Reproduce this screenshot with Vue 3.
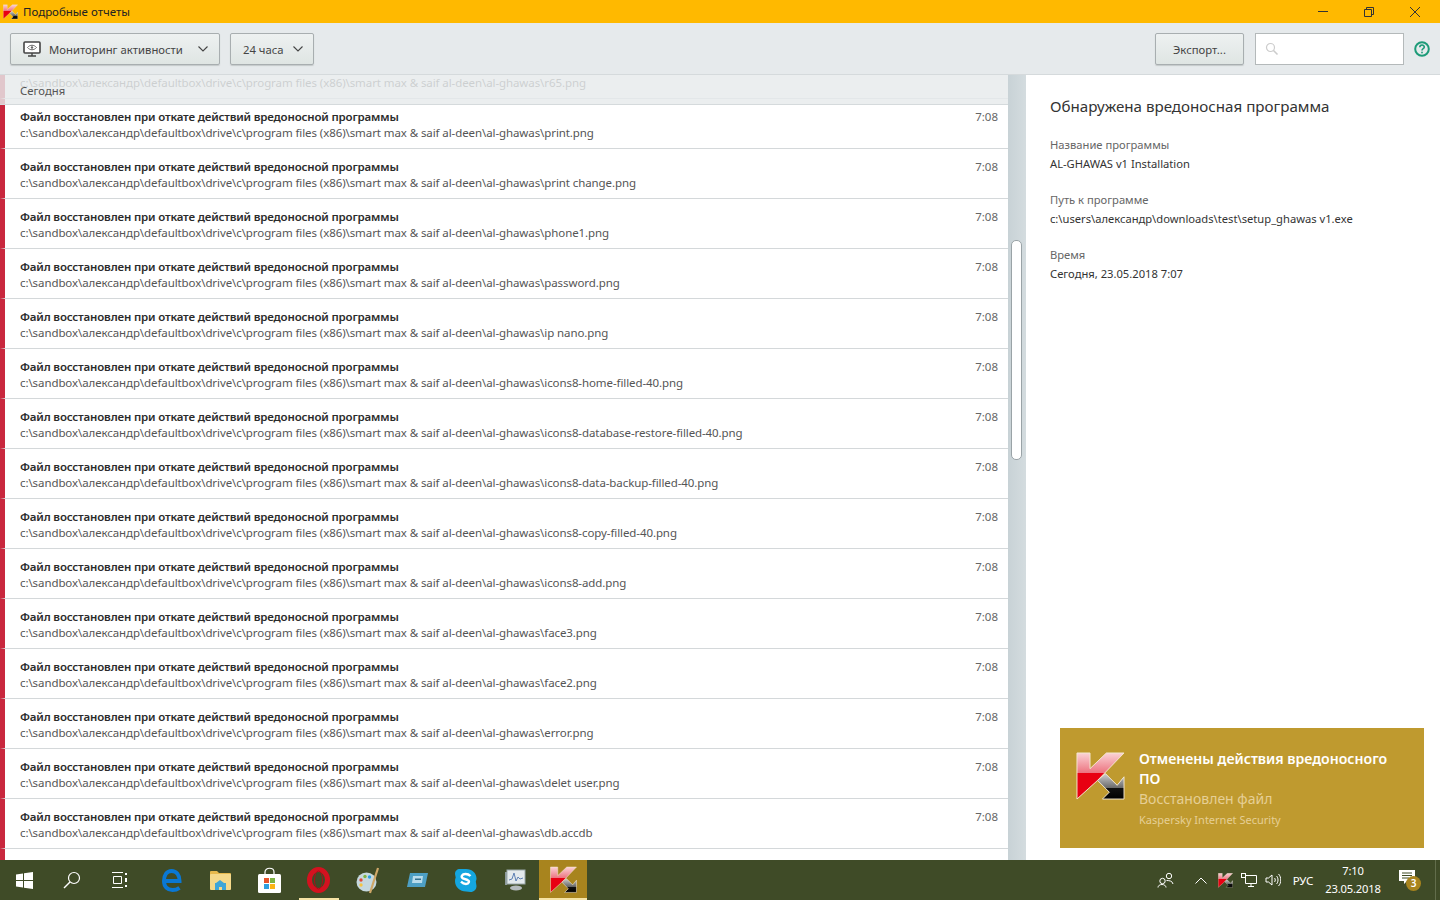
<script setup>
const base = 'c:\\sandbox\\александр\\defaultbox\\drive\\c\\program files (x86)\\smart max & saif al-deen\\al-ghawas\\'
const files = ['r65.png','print.png','print change.png','phone1.png','password.png','ip nano.png','icons8-home-filled-40.png','icons8-database-restore-filled-40.png','icons8-data-backup-filled-40.png','icons8-copy-filled-40.png','icons8-add.png','face3.png','face2.png','error.png','delet user.png','db.accdb','data.png']
const rows = files.map((f) => ({ path: base + f, title: 'Файл восстановлен при откате действий вредоносной программы', time: '7:08' }))
const details = [
  { label: 'Название программы', value: 'AL-GHAWAS v1 Installation' },
  { label: 'Путь к программе', value: 'c:\\users\\александр\\downloads\\test\\setup_ghawas v1.exe' },
  { label: 'Время', value: 'Сегодня, 23.05.2018 7:07' },
]
</script>

<template>
  <div class="app">
    <svg class="defs" width="0" height="0" aria-hidden="true">
      <defs>
        <linearGradient id="kr" x1="0" y1="0" x2="0" y2="1"><stop offset="0" stop-color="#fbd3d6"/><stop offset=".43" stop-color="#ec7480"/><stop offset=".43" stop-color="#e80012"/><stop offset="1" stop-color="#e80012"/></linearGradient>
        <linearGradient id="kk" x1="0" y1="0" x2="0" y2="1"><stop offset="0" stop-color="#d0d0d0"/><stop offset=".58" stop-color="#666"/><stop offset=".58" stop-color="#111"/><stop offset="1" stop-color="#000"/></linearGradient>
        <symbol id="klogo" viewBox="-1 -1 50 50">
          <path d="M0 0h13.300v16L30 0h18L21 28 0 47z" fill="url(#kr)" stroke="#f3e6cf" stroke-width="1"/>
          <path d="M21 28l8-7 12 12 7-8.700V47H26l7-7z" fill="url(#kk)" stroke="#f3e6cf" stroke-width="1"/>
        </symbol>
      </defs>
    </svg>
    <header class="titlebar">
      <svg class="tlogo" width="15" height="16"><use href="#klogo"/></svg>
      <span class="ttext">Подробные отчеты</span>
      <div class="winctl">
        <svg width="12" height="12" viewBox="0 0 12 12"><path d="M1 5.500h10" stroke="#333" fill="none"/></svg>
        <svg width="12" height="12" viewBox="0 0 12 12"><path d="M1.500 3.500h7v7h-7zM3.500 3.500v-2h7v7h-2" stroke="#333" fill="none"/></svg>
        <svg width="12" height="12" viewBox="0 0 12 12"><path d="M1 1l10 10M11 1L1 11" stroke="#333" fill="none"/></svg>
      </div>
    </header>

    <div class="toolbar">
      <button class="btn sel1">
        <svg width="18" height="16" viewBox="0 0 18 16"><rect x="1" y="1" width="16" height="11" rx="1" fill="#fff" stroke="#444" stroke-width="1.600"/><path d="M4.500 6.500c2.500-3 6.500-3 9 0-2.500 3-6.500 3-9 0z" fill="none" stroke="#666"/><circle cx="9" cy="6.500" r="1.200" fill="#666"/><path d="M9 12v3M5 15h8" stroke="#444" stroke-width="1.400"/></svg>
        <span class="l1">Мониторинг активности</span>
        <svg class="chev" width="10" height="6" viewBox="0 0 10 6"><path d="M.5.500L5 5 9.500.500" fill="none" stroke="#444" stroke-width="1.100"/></svg>
      </button>
      <button class="btn sel2">
        <span class="lbl">24 часа</span>
        <svg class="chev" width="10" height="6" viewBox="0 0 10 6"><path d="M.5.500L5 5 9.500.500" fill="none" stroke="#444" stroke-width="1.100"/></svg>
      </button>
      <div class="spacer"></div>
      <button class="btn export"><span class="lbl">Экспорт...</span></button>
      <div class="search">
        <svg width="14" height="14" viewBox="0 0 14 14"><circle cx="5.500" cy="5.500" r="4" fill="none" stroke="#ccc" stroke-width="1.200"/><path d="M8.500 8.500l4 4" stroke="#ccc" stroke-width="1.600"/></svg>
      </div>
      <svg class="help" width="16" height="16" viewBox="0 0 16 16"><circle cx="8" cy="8" r="6.800" fill="none" stroke="#1d9b78" stroke-width="2"/><path d="M5.800 6.300c0-3 4.500-3 4.500-.2 0 1.600-2.300 1.600-2.300 3.300" fill="none" stroke="#1d9b78" stroke-width="1.600"/><rect x="7.200" y="10.700" width="1.600" height="1.600" fill="#1d9b78"/></svg>
    </div>

    <main class="content">
      <section class="list">
        <div class="group">Сегодня</div>
        <div class="rows">
          <div v-for="(r, i) in rows" :key="i" class="row">
            <div class="rtext">
              <div class="rtitle">{{ r.title }}</div>
              <div class="rpath">{{ r.path }}</div>
            </div>
            <div class="rtime">{{ r.time }}</div>
          </div>
        </div>
      </section>
      <div class="gutter"><div class="thumb"></div></div>
      <aside class="detail">
        <h2>Обнаружена вредоносная программа</h2>
        <div v-for="d in details" :key="d.label" class="field">
          <div class="flabel">{{ d.label }}</div>
          <div class="fvalue">{{ d.value }}</div>
        </div>
        <div class="toast">
          <svg class="klogo" width="49" height="49"><use href="#klogo"/></svg>
          <div class="ttx">
            <div class="t1">Отменены действия вредоносного ПО</div>
            <div class="t2">Восстановлен файл</div>
            <div class="t3">Kaspersky Internet Security</div>
          </div>
        </div>
      </aside>
    </main>

    <footer class="taskbar">
      <div class="tb-item first">
        <svg width="17" height="17" viewBox="0 0 17 17"><path d="M0 2.500l7-1v6.500H0zM8 1.300L17 0v8H8zM0 9h7v6.500l-7-1zM8 9h9v8l-9-1.300z" fill="#fff"/></svg>
      </div>
      <div class="tb-item first">
        <svg width="18" height="18" viewBox="0 0 18 18"><circle cx="11" cy="7" r="5.500" fill="none" stroke="#fff" stroke-width="1.200"/><path d="M7 11l-6 6" stroke="#fff" stroke-width="1.400"/></svg>
      </div>
      <div class="tb-item first">
        <svg width="16" height="16" viewBox="0 0 16 16"><path d="M0 .5h11M0 15.500h11M1.500 4.500h8v7h-8z" fill="none" stroke="#fff"/><path d="M14 1v2M14 6v4M14 13v2" stroke="#fff" stroke-width="2"/></svg>
      </div>
      <div class="tb-item edge">
        <svg width="20" height="24" viewBox="0 0 20 24"><path d="M4 13h13.500c0-6-3-10-8-10C5 3 2 7 2 13c0 6 4 9 8.500 9 2.500 0 5-.8 7-2.200" fill="none" stroke="#0a78d4" stroke-width="4"/></svg>
      </div>
      <div class="tb-item">
        <svg width="21" height="21" viewBox="0 0 21 21"><path d="M0 2q0-1 1-1h6l2 2h11q1 0 1 1v3H0z" fill="#e7b94c"/><rect y="4" width="21" height="16" rx="1" fill="#f5d98a"/><path d="M5 20v-7h1l4-3 4 3h2v7h-4v-3H9v3z" fill="#3ea6d8"/></svg>
      </div>
      <div class="tb-item">
        <svg width="23" height="26" viewBox="0 0 23 26"><path d="M7 8V5c0-5 9-5 9 0v3" fill="none" stroke="#fff" stroke-width="1.200"/><rect y="7" width="23" height="19" rx="1.500" fill="#fff"/><rect x="6" y="11" width="5" height="5" fill="#e8532b"/><rect x="12" y="11" width="5" height="5" fill="#7db343"/><rect x="6" y="17" width="5" height="5" fill="#2f9fe0"/><rect x="12" y="17" width="5" height="5" fill="#fbb416"/></svg>
      </div>
      <div class="tb-item">
        <svg width="23" height="26" viewBox="0 0 23 26"><ellipse cx="11.500" cy="13" rx="9" ry="10.500" fill="none" stroke="#d3121f" stroke-width="5"/><ellipse cx="11.500" cy="13" rx="4" ry="9" fill="none" stroke="#a90f19" stroke-width="1"/></svg>
        <span class="under"></span>
      </div>
      <div class="tb-item">
        <svg width="24" height="27" viewBox="0 0 24 27"><ellipse cx="10.500" cy="15" rx="10" ry="9.500" fill="#c5d8de"/><circle cx="5" cy="13" r="1.700" fill="#dd4b39"/><circle cx="9" cy="9.500" r="1.700" fill="#7db343"/><circle cx="13.500" cy="10" r="1.700" fill="#2f9fe0"/><circle cx="5" cy="18" r="1.700" fill="#f5c542"/><path d="M22 1l-8 25" stroke="#cfa768" stroke-width="2.200"/></svg>
      </div>
      <div class="tb-item">
        <svg width="22" height="16" viewBox="0 0 22 16"><path d="M4 1h18l-3 14H1z" fill="#4d9fc4"/><path d="M7 4h10l-1 7H6z" fill="#b9dcec"/><path d="M9 6.500h6V8H9z" fill="#35718f"/></svg>
      </div>
      <div class="tb-item">
        <svg width="23" height="25" viewBox="0 0 23 25"><path d="M6 1C3 1 1 3 1 6l.7 3.500C1.200 10.500 1 12 1 13c0 6 5 10.500 11 10.500l4.500.5c3.500 0 6-2.500 6-6l-.7-4.500c.4-1 .7-2 .7-3C22.500 5 18 1 12 1z" fill="#14a6e0"/><path d="M16.500 8C15 6.500 13.500 6 11.500 6 8 6 6.500 9 9 10.500l4.500 1.500c2.500 1 1.500 4-1.500 4-2 0-3.500-.8-5-2.300" fill="none" stroke="#fff" stroke-width="2.400"/></svg>
      </div>
      <div class="tb-item">
        <svg width="22" height="24" viewBox="0 0 22 24"><path d="M1 4h2v13H1z" fill="#8d9a9d"/><rect x="3" y="2" width="18" height="14" fill="#e3e9ec" stroke="#9aa7aa"/><path d="M5 12l3-1 2-6 2 8 2-4 2 2 3-1" fill="none" stroke="#5d80b4"/><ellipse cx="12" cy="20" rx="6" ry="2.500" fill="#b5bbbd"/></svg>
      </div>
      <div class="tb-item kav">
        <svg width="27" height="28"><use href="#klogo"/></svg>
        <span class="under full"></span>
      </div>
      <div class="tray">
        <div class="slot person">
          <svg width="17" height="16" viewBox="0 0 17 16"><circle cx="5.500" cy="9" r="2.700" fill="none" stroke="#fff"/><circle cx="12" cy="4" r="2.700" fill="none" stroke="#fff"/><path d="M1 15.500c0-4 8-4 8 0M9.500 8.500c3 0 6 .5 6.500 3.500" fill="none" stroke="#fff"/></svg>
        </div>
        <div class="slot"><svg width="12" height="7" viewBox="0 0 12 7"><path d="M.5 6.500L6 1l5.500 5.500" fill="none" stroke="#fff"/></svg></div>
        <div class="slot"><svg width="15" height="15"><use href="#klogo"/></svg></div>
        <div class="slot"><svg width="16" height="14" viewBox="0 0 16 14"><path d="M4.500 2.500H15.500v8H4.500zM7 13.500h6M10 10.500v3" fill="none" stroke="#fff"/><rect x=".5" y=".5" width="4" height="4" fill="#3f4b27" stroke="#fff"/></svg></div>
        <div class="slot"><svg width="16" height="14" viewBox="0 0 16 14"><path d="M1 5h2.500L7 2v10L3.500 9H1zM9.500 5c1 1 1 3 0 4M11.500 3c2 2 2 6 0 8M13.500 1c3 3 3 9 0 12" fill="none" stroke="#fff"/></svg></div>
        <span class="lang">РУС</span>
        <div class="clock"><div>7:10</div><div>23.05.2018</div></div>
        <div class="notif">
          <svg width="16" height="14" viewBox="0 0 16 14"><path d="M0 0h16v11H8l-3 3v-3H0z" fill="#fff"/><path d="M3 3h10M3 5.500h10M3 8h7" stroke="#3f4b27"/></svg>
          <span class="badge">3</span>
        </div>
        <span class="divider"></span>
      </div>
    </footer>
  </div>
</template>

<style>
html, body { margin: 0; }
</style>

<style scoped>
.app { width: 1440px; height: 900px; display: flex; flex-direction: column; overflow: hidden; background: #fff; font-family: "Noto Sans", "Open Sans", sans-serif; color: #333; font-size: 12px; }
.defs { position: absolute; }
.titlebar { height: 23px; flex: none; background: #ffb900; display: flex; align-items: center; padding-left: 3px; }
.tlogo { margin-right: 5px; }
.ttext { font-size: 11.500px; color: #222; }
.winctl { margin-left: auto; display: flex; gap: 34px; padding-right: 19px; align-items: center; }
.toolbar { height: 52px; flex: none; box-sizing: border-box; background: #e6eaec; border-bottom: 1px solid #d5dadc; display: flex; align-items: center; padding: 0 10px; }
.btn { box-sizing: border-box; height: 32px; border: 1px solid #a8aeb0; border-radius: 2px; background: linear-gradient(#eef1f1, #dfe5e3); box-shadow: 0 1px 1px #c4c9ca; font: inherit; font-size: 11.300px; color: #444; display: flex; align-items: center; padding: 0; }
.sel1 { width: 210px; padding-left: 12px; }
.l1 { margin-left: 8px; margin-top: 2px; }
.lbl { margin-top: 2px; }
.sel1 .chev { margin-left: 15px; }
.sel2 { width: 84px; margin-left: 10px; padding-left: 12px; }
.sel2 .chev { margin-left: 9px; }
.spacer { flex: 1; }
.export { width: 89px; justify-content: center; }
.search { box-sizing: border-box; width: 149px; height: 32px; margin-left: 11px; background: #fff; border: 1px solid #b4b9ba; display: flex; align-items: center; padding-left: 9px; }
.help { margin-left: 10px; }
.content { flex: 1; min-height: 0; display: flex; }
.list { position: relative; width: 1008px; overflow: hidden; }
.group { position: absolute; z-index: 1; left: 0; top: 0; right: 0; height: 30px; box-sizing: border-box; padding: 7px 0 0 20px; background: rgba(230, 234, 236, .82); border-bottom: 1px solid #d5dadc; color: #555; font-size: 11.300px; line-height: 18px; }
.rows { margin-top: -26px; }
.row { box-sizing: border-box; height: 50px; border-bottom: 1px solid #d4d8da; border-left: 5px solid #c9283e; padding: 9px 10px 0 15px; display: flex; justify-content: space-between; background: #fff; }
.rtitle { font-weight: 600; color: #2b2b2b; line-height: 18px; font-size: 11.500px; letter-spacing: -.17px; }
.rpath { color: #555; line-height: 14px; font-size: 11.500px; letter-spacing: -.09px; }
.rtime { color: #666; line-height: 18px; font-size: 11.500px; }
.gutter { width: 18px; flex: none; background: linear-gradient(90deg, #c8d2d6, #d4dcdf); position: relative; }
.thumb { position: absolute; left: 3px; top: 165px; width: 11px; height: 220px; box-sizing: border-box; border: 1px solid #9aa3a7; border-radius: 5px; background: #fff; }
.detail { flex: 1; position: relative; padding: 21px 0 0 24px; }
h2 { margin: 0 0 19px; font-size: 15.150px; font-weight: 400; color: #333; line-height: 20px; }
.field { margin-bottom: 17px; line-height: 19px; font-size: 11.200px; }
.flabel { color: #666; }
.fvalue { color: #333; }
.toast { position: absolute; left: 34px; top: 653px; width: 364px; height: 120px; background: #bf9a2f; display: flex; box-sizing: border-box; padding: 24px 0 0 16px; }
.klogo { flex: none; }
.ttx { margin: -3px 0 0 14px; width: 262px; }
.t1 { color: #fff; font-size: 14.100px; font-weight: 600; line-height: 20px; }
.t2 { color: #e6cf95; font-size: 14px; line-height: 20px; }
.t3 { color: #e6cf95; font-size: 11px; line-height: 22px; }
.taskbar { height: 40px; flex: none; background: #3f4b27; display: flex; align-items: center; color: #fff; }
.tb-item { position: relative; width: 49px; height: 40px; display: flex; align-items: center; justify-content: center; flex: none; box-sizing: border-box; }
.first { width: 48px; }
.edge { margin-left: 3px; }
.under { position: absolute; bottom: 0; left: 5px; width: 40px; height: 2px; background: #f5e3a5; }
.under.full { left: 0; width: 100%; }
.kav { width: 48px; background: #a8841e; }
.tray { margin-left: auto; display: flex; align-items: center; width: 287px; }
.slot { width: 24px; display: flex; justify-content: center; flex: none; }
.person { margin-right: 12px; }
.lang { width: 36px; text-align: center; font-size: 11.500px; flex: none; margin-right: 2px; }
.clock { text-align: center; line-height: 18px; width: 60px; flex: none; font-size: 11.200px; letter-spacing: -.15px; }
.notif { position: relative; margin-left: 16px; margin-top: -7px; width: 16px; height: 14px; flex: none; }
.notif svg { display: block; }
.badge { position: absolute; left: 7px; top: 6px; width: 15px; height: 15px; border-radius: 50%; background: #a8841e; color: #fff; font-size: 10px; line-height: 15px; text-align: center; font-weight: 600; }
.divider { width: 1px; height: 40px; margin-left: 20px; background: #626d4b; flex: none; }
</style>
